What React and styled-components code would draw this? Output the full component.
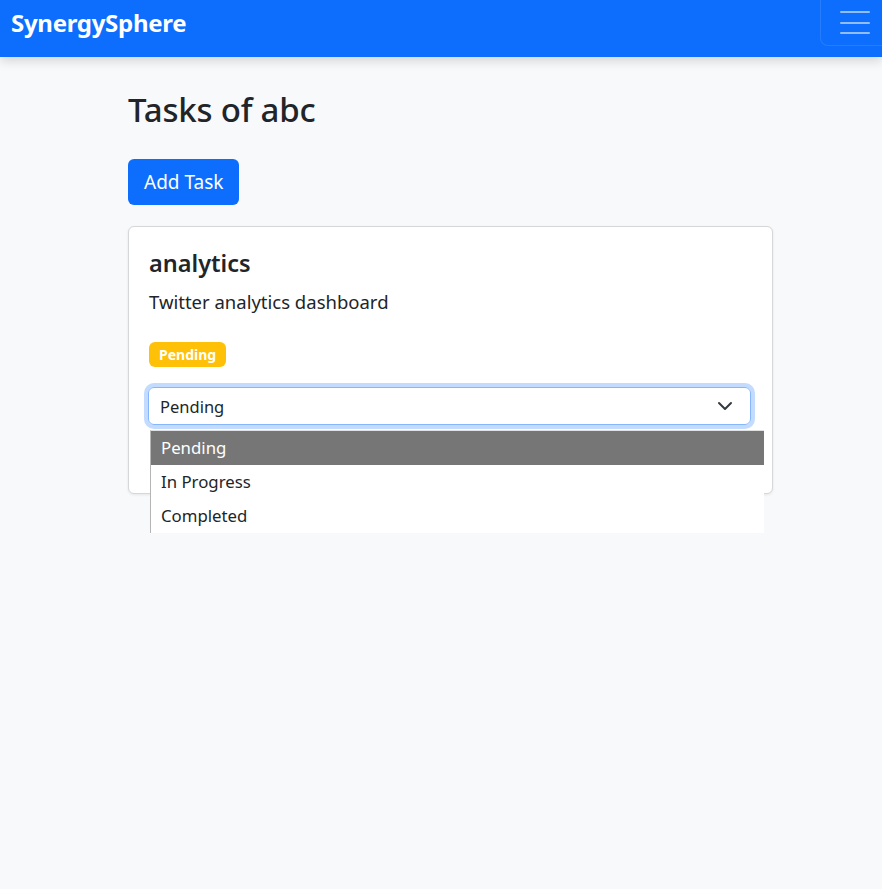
import React from "react";
import styled, { createGlobalStyle } from "styled-components";

const Global = createGlobalStyle`
  html, body { margin: 0; padding: 0; }
  body {
    background: #f8f9fa;
    font-family: "Noto Sans", "Liberation Sans", sans-serif;
    color: #212529;
    min-height: 889px;
    overflow: hidden;
  }
  * { box-sizing: border-box; }
`;

const Navbar = styled.nav`
  height: 57px;
  background: #0d6efd;
  display: flex;
  align-items: flex-start;
  justify-content: space-between;
  padding: 0 0 0 11px;
  box-shadow: 0 4px 10px rgba(0, 0, 0, 0.15);
  position: relative;
  z-index: 2;
`;

const Brand = styled.a`
  color: #fff;
  font-weight: 700;
  font-size: 24px;
  line-height: 46px;
  letter-spacing: -0.3px;
  text-decoration: none;
`;

const Toggler = styled.button`
  width: 70px;
  height: 46px;
  margin-right: -8px;
  border: 1px solid rgba(255, 255, 255, 0.1);
  border-top: none;
  border-radius: 0 0 8px 8px;
  background: transparent;
  display: flex;
  flex-direction: column;
  justify-content: center;
  gap: 8.5px;
  padding: 0 0 0 19px;
`;

const Line = styled.span`
  display: block;
  width: 30px;
  height: 2px;
  background: rgba(255, 255, 255, 0.55);
  border-radius: 1px;
`;

const Container = styled.main`
  width: 645px;
  margin-left: 128px;
  padding-top: 33px;
`;

const Title = styled.h2`
  margin: 0 0 29px;
  font-size: 33px;
  font-weight: 500;
  line-height: 40px;
  letter-spacing: -0.2px;
`;

const PrimaryButton = styled.button`
  background: #0d6efd;
  color: #fff;
  border: none;
  border-radius: 6px;
  font-family: inherit;
  font-size: 19px;
  height: 46px;
  padding: 0 16px;
  margin-bottom: 21px;
`;

const Card = styled.section`
  background: #fff;
  border: 1px solid #d5d7d9;
  border-radius: 6px;
  box-shadow: 0 1px 3px rgba(0, 0, 0, 0.08);
  padding: 20px 20px 68px;
  position: relative;
`;

const CardTitle = styled.h5`
  margin: 0 0 10px;
  font-size: 23.5px;
  font-weight: 600;
  line-height: 32px;
`;

const CardText = styled.p`
  margin: 0 0 27px;
  font-size: 18.5px;
  line-height: 26px;
`;

const Badge = styled.span`
  display: inline-block;
  background: #ffc107;
  color: #fff;
  font-weight: 700;
  font-size: 14px;
  height: 25px;
  line-height: 25px;
  padding: 0 10px;
  border-radius: 6px;
`;

const BadgeRow = styled.div`
  display: flex;
  margin-bottom: 20px;
`;

const SelectBox = styled.div`
  height: 38px;
  margin-left: -1px;
  margin-right: 1px;
  border: 1px solid #86b7fe;
  border-radius: 6px;
  box-shadow: 0 0 0 4px rgba(13, 110, 253, 0.25);
  display: flex;
  align-items: center;
  justify-content: space-between;
  padding: 0 17px 0 11px;
  font-size: 16.5px;
`;

const Dropdown = styled.ul`
  position: absolute;
  left: 21px;
  top: 203px;
  width: 614px;
  margin: 0;
  padding: 0;
  list-style: none;
  background: #fff;
  border-left: 1px solid #b5b5b5;
  border-top: 1px solid #e0e0e0;
  z-index: 3;
`;

const Option = styled.li`
  height: 34px;
  line-height: 34px;
  padding-left: 10px;
  font-size: 16.8px;
  background: ${(p) => (p.$selected ? "#767676" : "#fff")};
  color: ${(p) => (p.$selected ? "#fff" : "#212529")};
`;

export default function App() {
  return (
    <>
      <Global />
      <Navbar>
        <Brand href="#">SynergySphere</Brand>
        <Toggler aria-label="menu">
          <Line />
          <Line />
          <Line />
        </Toggler>
      </Navbar>
      <Container>
        <Title>Tasks of abc</Title>
        <PrimaryButton>Add Task</PrimaryButton>
        <Card>
          <CardTitle>analytics</CardTitle>
          <CardText>Twitter analytics dashboard</CardText>
          <BadgeRow>
            <Badge>Pending</Badge>
          </BadgeRow>
          <SelectBox>
            <span>Pending</span>
            <svg width="16" height="16" viewBox="0 0 16 16">
              <path d="M2 5l6 6 6-6" fill="none" stroke="#343a40" strokeWidth="2" strokeLinecap="round" strokeLinejoin="round" />
            </svg>
          </SelectBox>
          <Dropdown>
            <Option $selected>Pending</Option>
            <Option>In Progress</Option>
            <Option>Completed</Option>
          </Dropdown>
        </Card>
      </Container>
    </>
  );
}
